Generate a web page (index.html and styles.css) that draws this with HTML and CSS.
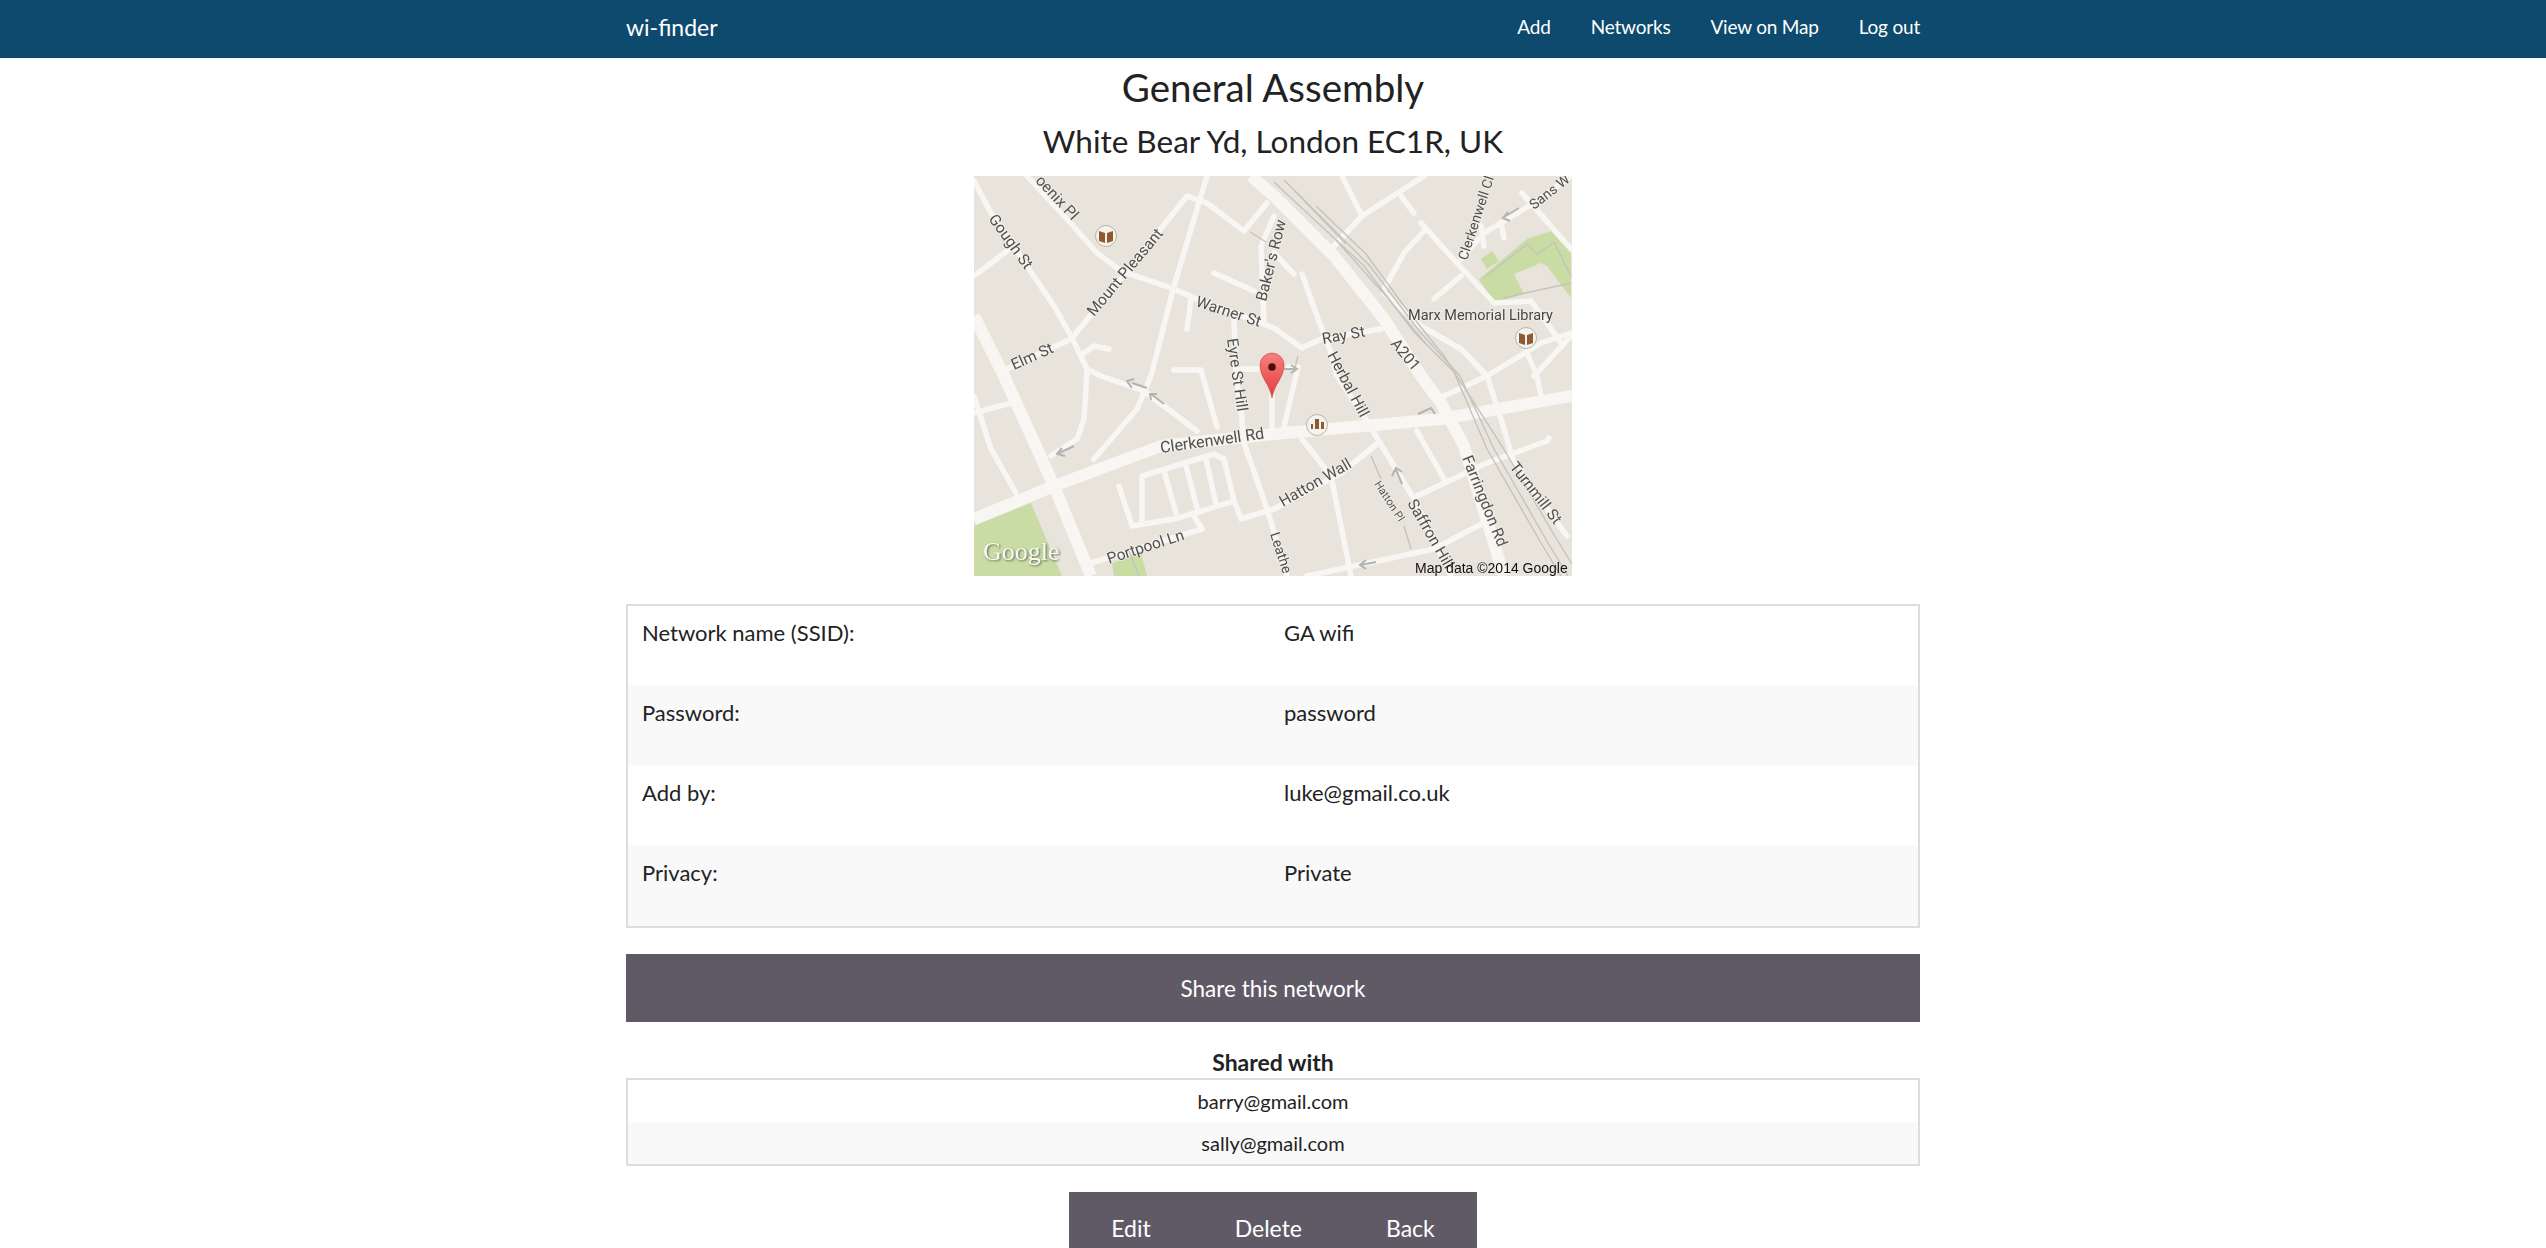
FILE: index.html
```html
<!DOCTYPE html>
<html lang="en">
<head>
    <meta charset="UTF-8">
    <title>wi-finder</title>
    <link rel="stylesheet" href="styles.css">
</head>
<body>

<header class="topbar">
    <div class="topbar-inner">
        <a class="brand" href="#">wi-finder</a>
        <nav class="nav-links">
            <a href="#">Add</a>
            <a href="#">Networks</a>
            <a href="#">View on Map</a>
            <a href="#">Log out</a>
        </nav>
    </div>
</header>

<main class="page">
    <h1 class="place-name">General Assembly</h1>
    <h2 class="place-address">White Bear Yd, London EC1R, UK</h2>

    <svg class="map" viewBox="0 0 598 400" width="598" height="400">
        <defs>
            <linearGradient id="pin-red" x1="0" y1="0" x2="0" y2="1">
                <stop offset="0" stop-color="#f88080"/>
                <stop offset="1" stop-color="#e23a3a"/>
            </linearGradient>
        </defs>
        <rect class="map-land" width="598" height="400"/>

        <g class="map-green">
            <path d="M0 350L57 327L88 400H0Z"/>
            <path d="M138 387L167 377L173 400H140Z"/>
            <path d="M505 103L553 63L577 55L597 77V122L573 90L567 87L540 98L550 118L520 127Z"/>
            <path d="M507 83L518 75L525 85L513 93Z"/>
        </g>

        <g class="map-roads-thin">
            <path d="M0 5L17 37L53 90L80 130L97 160L113 193L127 200L170 215L223 255"/>
            <path d="M113 195L110 243L103 263L77 280"/>
            <path d="M135 173L120 170L110 177"/>
            <path d="M0 100L37 72"/>
            <path d="M53 0L93 43L123 77L147 95L200 113L220 122L300 152L328 172L347 163L407 153"/>
            <path d="M33 193L97 163L147 103L213 20L233 27L270 55L293 27"/>
            <path d="M233 0L200 110L177 200L163 233L120 283"/>
            <path d="M240 97L280 115"/>
            <path d="M217 123L213 153"/>
            <path d="M290 145L287 70L300 40"/>
            <path d="M300 77L320 98"/>
            <path d="M260 143L262 200L267 233L270 267L293 333L313 400"/>
            <path d="M200 194H227L243 251"/>
            <path d="M267 193H292"/>
            <path d="M298 251V220"/>
            <path d="M310 251L324 191H314"/>
            <path d="M360 70L388 40L450 0"/>
            <path d="M368 0L388 40"/>
            <path d="M427 20L440 37"/>
            <path d="M447 47L483 87L520 127L557 125L587 167"/>
            <path d="M450 55L430 77L410 113"/>
            <path d="M487 100L460 123"/>
            <path d="M487 83L510 57L560 27L597 0"/>
            <path d="M548 17L597 73"/>
            <path d="M527 47L530 62"/>
            <path d="M507 50L510 70"/>
            <path d="M410 117L447 150L487 173L513 200L527 243L540 287L593 360"/>
            <path d="M328 98L343 140L357 177L363 200L390 240L400 257L440 323L477 400"/>
            <path d="M513 200L567 167L597 157"/>
            <path d="M470 220L513 200"/>
            <path d="M553 177L563 200L567 220"/>
            <path d="M597 160L560 200"/>
            <path d="M0 237L37 227"/>
            <path d="M0 220L17 273L42 317"/>
            <path d="M145 310L158 350L200 343L228 335L260 325L267 343L300 333L367 297L403 268"/>
            <path d="M168 347V300L240 278L250 283L260 325"/>
            <path d="M190 295L202 337"/>
            <path d="M212 290L223 332"/>
            <path d="M232 283L242 328"/>
            <path d="M220 340L228 353L117 387"/>
            <path d="M328 263L357 300L377 400"/>
            <path d="M443 255L470 303"/>
            <path d="M443 320L513 287L573 265L575 262"/>
            <path d="M333 400L460 373L513 345"/>
        </g>

        <g class="map-roads-wide">
            <path d="M277 0L300 20L360 80L410 143L447 200L467 227L490 270L530 400"/>
            <path d="M0 140L30 200L80 310L117 400"/>
            <path d="M0 343L80 310L187 270L300 258L467 243L598 220"/>
        </g>

        <g class="map-rail">
            <path d="M300 6L390 90L440 156L480 196L513 273L567 367L587 400"/>
            <path d="M310 4L396 90L446 156L486 200L520 273L574 367L594 400"/>
            <path d="M342 30L392 78L430 130L470 180L528 270L582 362L598 388"/>
            <path d="M320 14L372 68M362 64L412 120L452 168"/>
            <path d="M510 102L553 68L563 78L580 66L597 100"/>
            <path d="M529 122L597 107"/>
            <path d="M397 280L407 303"/>
            <path d="M430 350L437 373"/>
            <path d="M276 56L292 66"/>
            <path d="M324 180L320 196"/>
            <path d="M155 375L165 400"/>
        </g>

        <g class="map-arrows">
            <path d="M173 212L158 207M160 203L153 205L158 212"/>
            <path d="M177 218L190 228M177 224L176 218L183 218"/>
            <path d="M100 270L85 277M88 272L83 278L91 280"/>
            <path d="M545 32L530 41M534 36L529 42L536 45"/>
            <path d="M310 193L320 193M317 189L323 193L317 197"/>
            <path d="M428 308L422 294M418 300L422 292L428 296"/>
            <path d="M402 386L387 389M392 384L386 389L392 393"/>
            <path d="M444 238L457 232L461 238"/>
        </g>

        <g class="map-labels">
            <text x="14" y="43" transform="rotate(54 14 43)">Gough St</text>
            <text x="98" y="45" text-anchor="end" transform="rotate(47 98 45)">oenix Pl</text>
            <text x="120" y="141" transform="rotate(-50 120 141)">Mount Pleasant</text>
            <text x="221" y="130" transform="rotate(18 221 130)">Warner St</text>
            <text x="292" y="126" transform="rotate(-76 292 126)">Baker's Row</text>
            <text x="40" y="194" transform="rotate(-24 40 194)">Elm St</text>
            <text x="253" y="163" transform="rotate(82 253 163)">Eyre St Hill</text>
            <text x="349" y="168" transform="rotate(-10 349 168)">Ray St</text>
            <text x="416" y="168" transform="rotate(50 416 168)">A201</text>
            <text x="353" y="179" transform="rotate(62 353 179)">Herbal Hill</text>
            <text x="434" y="144" class="map-label-place">Marx Memorial Library</text>
            <text x="493" y="85" class="map-label-tight" transform="rotate(-72 493 85)">Clerkenwell Cl</text>
            <text x="560" y="34" class="map-label-tight" transform="rotate(-38 560 34)">Sans W</text>
            <text x="187" y="277" class="map-label-road" transform="rotate(-8 187 277)">Clerkenwell Rd</text>
            <text x="309" y="331" transform="rotate(-30 309 331)">Hatton Wall</text>
            <text x="400" y="308" class="map-label-small" transform="rotate(57 400 308)">Hatton Pl</text>
            <text x="433" y="327" transform="rotate(60 433 327)">Saffron Hill</text>
            <text x="488" y="282" transform="rotate(68 488 282)">Farringdon Rd</text>
            <text x="535" y="291" transform="rotate(52 535 291)">Turnmill St</text>
            <text x="296" y="358" class="map-label-tight" transform="rotate(72 296 358)">Leathe</text>
            <text x="135" y="388" transform="rotate(-18 135 388)">Portpool Ln</text>
        </g>

        <g class="map-poi">
            <circle cx="132" cy="60" r="10.5"/>
            <path class="poi-fill" d="M125 55L131 57V67L125 65ZM139 55L133 57V67L139 65Z"/>
            <circle cx="552" cy="162" r="10.5"/>
            <path class="poi-fill" d="M545 157L551 159V169L545 167ZM559 157L553 159V169L559 167Z"/>
            <circle cx="343" cy="249" r="10.5"/>
            <path class="poi-fill" d="M337 253V248H339V253ZM341 253V243H345V253ZM347 253V246H350V253Z"/>
        </g>

        <g class="map-pin">
            <path class="pin-body" fill="url(#pin-red)" d="M298 222C296 208 286 202 286 189A12 12 0 0 1 310 189C310 202 300 208 298 222Z"/>
            <circle class="pin-dot" cx="298" cy="191" r="3.8"/>
        </g>

        <text class="map-logo" x="9" y="384">Google</text>
        <text class="map-credit" x="441" y="397">Map data ©2014 Google</text>
    </svg>

    <table class="details">
        <tr><td>Network name (SSID):</td><td>GA wifi</td></tr>
        <tr><td>Password:</td><td>password</td></tr>
        <tr><td>Add by:</td><td>luke@gmail.co.uk</td></tr>
        <tr><td>Privacy:</td><td>Private</td></tr>
    </table>

    <a class="btn btn-block" href="#">Share this network</a>

    <div class="shared-title">Shared with</div>
    <table class="shared">
        <tr><td>barry@gmail.com</td></tr>
        <tr><td>sally@gmail.com</td></tr>
    </table>

    <div class="btn-group">
        <a class="btn" href="#">Edit</a>
        <a class="btn" href="#">Delete</a>
        <a class="btn" href="#">Back</a>
    </div>
</main>

</body>
</html>
```

FILE: styles.css
```css
html, body {
    height: 100%;
    overflow: hidden;
}

body {
    margin: 0;
    font-family: Lato, "Open Sans", sans-serif;
    color: #222;
    background-color: #fff;
}

a {
    text-decoration: none;
}

.topbar {
    height: 58px;
    background-color: #0e4a6e;
}

.topbar-inner {
    width: 1294px;
    height: 100%;
    margin: 0 auto;
    padding-bottom: 5px;
    box-sizing: border-box;
    display: flex;
    align-items: center;
    justify-content: space-between;
}

.brand {
    color: #fff;
    font-size: 23px;
}

.nav-links {
    display: flex;
    gap: 40px;
}

.nav-links a {
    color: #fff;
    font-size: 19px;
    letter-spacing: -0.2px;
}

.page {
    width: 1294px;
    margin: 0 auto;
    display: flex;
    flex-direction: column;
    align-items: center;
}

.place-name {
    margin: 6px 0 0;
    font-size: 38.5px;
    line-height: 46px;
    font-weight: 400;
}

.place-address {
    margin: 12px 0 0;
    font-size: 31.5px;
    line-height: 38px;
    font-weight: 400;
}

/* map */
.map {
    display: block;
    margin: 16px 0 28px;
    filter: blur(0.4px);
}

.map-land {
    fill: #e8e4dc;
}

.map-green path {
    fill: #c9dca4;
}

.map-rail path {
    fill: none;
    stroke: #c4c3bd;
    stroke-width: 1.4;
}

.map-roads-thin path,
.map-roads-wide path {
    fill: none;
    stroke: #f7f6f2;
    stroke-linecap: round;
    stroke-linejoin: round;
}

.map-roads-thin path {
    stroke-width: 5.5;
}

.map-roads-wide path {
    stroke-width: 12;
    stroke-linecap: butt;
}

.map-arrows path {
    fill: none;
    stroke: #b3b4b2;
    stroke-width: 2;
}

.map-labels text {
    font-family: Roboto, sans-serif;
    font-size: 15.5px;
    fill: #4f4f4c;
    paint-order: stroke;
    stroke: #f2f0ea;
    stroke-width: 1.5px;
}

.map-labels .map-label-place {
    font-size: 14.5px;
    fill: #45453f;
}

.map-labels .map-label-small {
    font-size: 11px;
}

.map-labels .map-label-tight {
    font-size: 14px;
}

.map-labels .map-label-road {
    font-size: 16px;
}

.map-poi circle {
    fill: #f5f3ee;
    stroke: #b8b4ac;
    stroke-width: 1;
}

.poi-fill {
    fill: #8f5a30;
}

.pin-body {
    stroke: #c8403e;
    stroke-width: 0.6;
}

.pin-dot {
    fill: #4b0f10;
}

.map-logo {
    font-family: "Liberation Serif", serif;
    font-size: 26px;
    fill: #f8f9f2;
    filter: drop-shadow(1px 1px 1px #5f6658);
}

.map-credit {
    font-family: "Liberation Sans", sans-serif;
    font-size: 14px;
    fill: #111;
}

/* tables */
.details,
.shared {
    width: 100%;
    border-collapse: separate;
    border-spacing: 0;
    border: 2px solid #ddd;
}

.details td {
    height: 80px;
    padding: 14px 14px 0;
    box-sizing: border-box;
    vertical-align: top;
    font-size: 22px;
    line-height: 26px;
}

.details td:first-child {
    width: 642px;
}

.details tr:nth-child(even) td,
.shared tr:nth-child(even) td {
    background-color: #f9f9f9;
}

.shared td {
    height: 42px;
    padding: 0;
    text-align: center;
    font-size: 20px;
}

.btn {
    color: #fff;
    background-color: #605a67;
    font-size: 23px;
}

.btn-block {
    width: 100%;
    height: 68px;
    margin-top: 26px;
    display: flex;
    align-items: center;
    justify-content: center;
    font-size: 22.5px;
}

.shared-title {
    margin-top: 28px;
    height: 28px;
    font-size: 23px;
    font-weight: 700;
    line-height: 24px;
}

.btn-group {
    margin-top: 26px;
    display: flex;
}

.btn-group .btn {
    padding: 22px 42px;
}
```
